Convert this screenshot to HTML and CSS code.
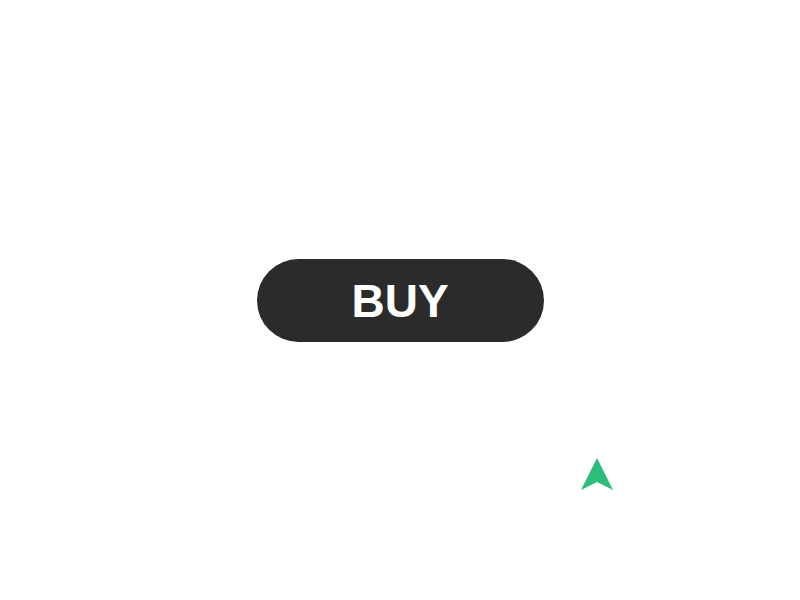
FILE: index.html
```html
<!DOCTYPE html>
<html>
<head>
<meta charset="utf-8">
<link rel="stylesheet" href="styles.css">
</head>
<body>
<main class="stage">
  <button class="buy">BUY</button>
  <svg class="pointer" width="34" height="34" viewBox="0 0 34 34">
    <path d="M17 1 L33 33 L17 25 L1 33 Z" fill="#2dbd7b"/>
  </svg>
</main>
</body>
</html>
```
FILE: styles.css
```css
html, body { margin: 0; padding: 0; background: #fff; }
.stage {
  position: relative;
  width: 800px;
  height: 600px;
  display: flex;
  align-items: center;
  justify-content: center;
}
.buy {
  width: 287px;
  height: 83px;
  border: none;
  border-radius: 42px;
  background: #2b2b2b;
  color: #fff;
  font-family: "Liberation Sans", Arial, sans-serif;
  font-weight: bold;
  font-size: 46px;
  padding: 0;
  margin-top: 1px;
}
.pointer {
  position: absolute;
  left: 580px;
  top: 457px;
}
```
